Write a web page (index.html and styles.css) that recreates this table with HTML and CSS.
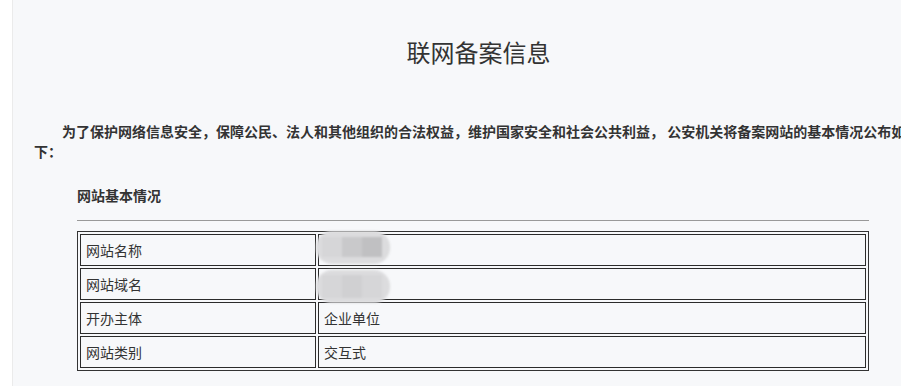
FILE: index.html
```html
<!DOCTYPE html>
<html>
<head>
  <meta charset="utf-8">
  <title>联网备案信息</title>
  <link rel="stylesheet" href="styles.css">
</head>
<body>
  <div class="page">
    <h1>联网备案信息</h1>
    <p class="intro">为了保护网络信息安全，保障公民、法人和其他组织的合法权益，维护国家安全和社会公共利益， 公安机关将备案网站的基本情况公布如下：</p>

    <div class="section">
      <h2>网站基本情况</h2>
      <hr>
      <table class="info">
        <colgroup>
          <col class="col-label">
          <col>
        </colgroup>
        <tr>
          <td>网站名称</td>
          <td class="masked">
            <span class="mosaic mosaic-name">
              <i></i><i class="dark"></i><i class="darker"></i>
            </span>
          </td>
        </tr>
        <tr>
          <td>网站域名</td>
          <td class="masked">
            <span class="mosaic mosaic-domain">
              <i></i><i class="mid"></i><i></i>
            </span>
          </td>
        </tr>
        <tr>
          <td>开办主体</td>
          <td>企业单位</td>
        </tr>
        <tr>
          <td>网站类别</td>
          <td>交互式</td>
        </tr>
      </table>
    </div>
  </div>
</body>
</html>
```

FILE: styles.css
```css
html, body {
  overflow: hidden;
}

body {
  margin: 0;
  background-color: #fff;
  font-family: "Noto Sans CJK SC", "Liberation Sans", sans-serif;
  color: #333;
}

.page {
  margin-left: 12px;
  width: 932px;
  min-height: 386px;
  padding-top: 34px;
  box-sizing: border-box;
  background-color: #f7f8fa;
  border-left: 1px solid #ebebeb;
}

h1 {
  margin: 0;
  font-size: 24px;
  font-weight: normal;
  line-height: 36px;
  text-align: center;
}

.intro {
  width: 880px;
  margin: 51px 0 0 21px;
  font-size: 14px;
  font-weight: bold;
  line-height: 20px;
  text-indent: 2em;
}

.section {
  width: 792px;
  margin: 24px 0 0 64px;
}

h2 {
  margin: 0;
  font-size: 14px;
  font-weight: bold;
  line-height: 20px;
}

hr {
  height: 0;
  margin: 15px 0 10px;
  border: none;
  border-top: 1px solid #999;
}

.info {
  width: 100%;
  table-layout: fixed;
  border: 1px solid #333;
  border-spacing: 2px;
  font-size: 14px;
}

.col-label {
  width: 236px;
}

.info td {
  padding: 5px 5px;
  line-height: 20px;
  border: 1px solid #2b2b2b;
}

/* blurred cover over private values */
.masked {
  position: relative;
}

.mosaic {
  position: absolute;
  display: flex;
  padding: 0 8px 0 6px;
  background-color: #dcdcde;
  border-radius: 16px;
  filter: blur(1.2px);
}

.mosaic i {
  width: 20px;
  background-color: #d6d6d8;
}

.mosaic i.mid {
  background-color: #d0d0d2;
}

.mosaic i.dark {
  background-color: #c9c9cb;
}

.mosaic i.darker {
  background-color: #c0c0c2;
}

.mosaic-name {
  left: -3px;
  top: -4px;
  height: 33px;
  padding-top: 6px;
  padding-bottom: 7px;
  box-sizing: border-box;
}

.mosaic-domain {
  left: -3px;
  top: 1px;
  height: 33px;
  padding-top: 5px;
  padding-bottom: 5px;
  box-sizing: border-box;
}
```
